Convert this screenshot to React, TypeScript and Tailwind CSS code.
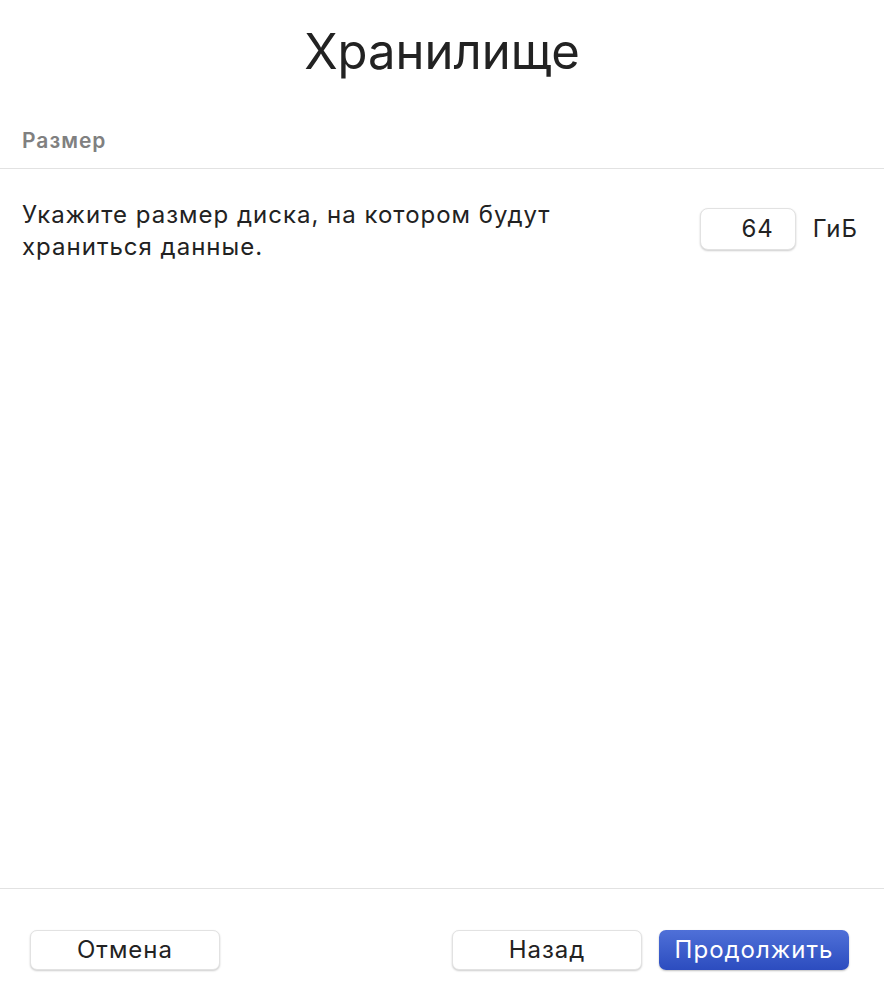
import React from 'react'

const Button = ({ label, primary }: { label: string; primary?: boolean }) => {
  if (primary) {
    return (
      <button className="w-[190px] h-[40px] rounded-[7px] bg-gradient-to-b from-[#4f70d8] to-[#2c4cbf] text-white text-[24px] tracking-[1px] shadow-[0_1px_2px_rgba(0,0,0,0.25)]">
        {label}
      </button>
    )
  }
  return (
    <button className="w-[190px] h-[40px] rounded-[7px] bg-white text-[#222] text-[24px] tracking-[1px] border border-[#e2e2e2] shadow-[0_1px_2px_rgba(0,0,0,0.2)]">
      {label}
    </button>
  )
}

const App = () => {
  return (
    <div
      className="w-[884px] h-[1004px] bg-white flex flex-col text-[#222]"
      style={{ fontFamily: 'Inter, "Noto Sans", sans-serif' }}
    >
      <div className="h-[106px] flex justify-center pt-[20px]">
        <h1 className="text-[49px] leading-[64px] text-[#222]">Хранилище</h1>
      </div>

      <div className="h-[63px] px-[22px] flex items-center pt-[8px] border-b border-[#e2e2e2]">
        <span className="text-[21px] font-semibold tracking-[1px] text-[#808080]">Размер</span>
      </div>

      <div className="flex-1 px-[22px] pt-[30px] flex justify-between items-start">
        <p className="text-[24px] leading-[32px] tracking-[1px] w-[560px] text-[#222]">
          Укажите размер диска, на котором будут храниться данные.
        </p>
        <div className="flex items-center gap-[17px] mt-[9px] mr-[4px]">
          <div className="w-[96px] h-[42px] rounded-[8px] border border-[#e2e2e2] bg-white shadow-[0_1px_2px_rgba(0,0,0,0.2)] flex items-center justify-end pr-[21px] text-[24px] tracking-[1px]">
            64
          </div>
          <span className="text-[24px] tracking-[1px]">ГиБ</span>
        </div>
      </div>

      <div className="h-[116px] border-t border-[#e2e2e2] flex items-start justify-between pt-[41px] px-[30px] pr-[35px]">
        <Button label="Отмена" />
        <div className="flex gap-[17px]">
          <Button label="Назад" />
          <Button label="Продолжить" primary />
        </div>
      </div>
    </div>
  )
}

export default App
